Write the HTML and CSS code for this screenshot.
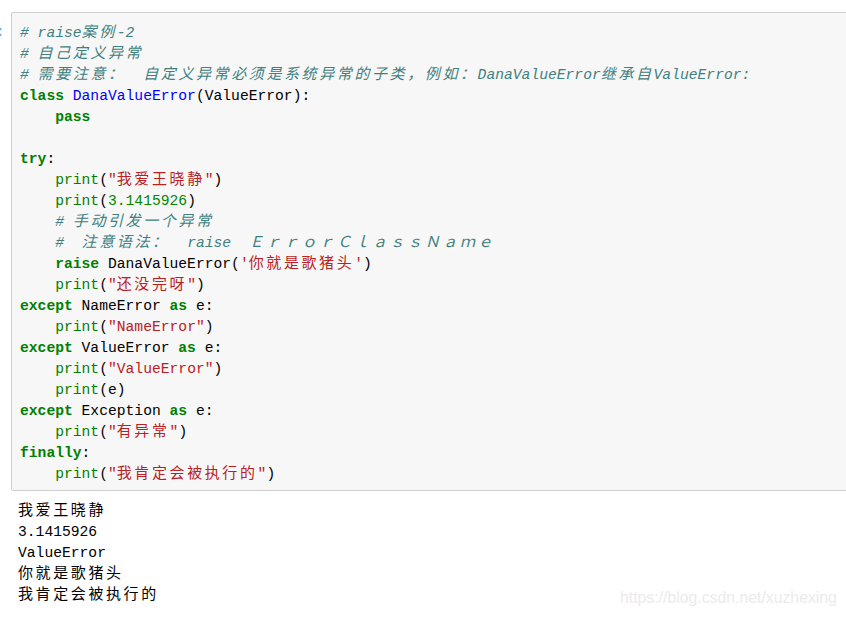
FILE: index.html
```html
<!DOCTYPE html>
<html>
<head>
<meta charset="utf-8">
<link rel="stylesheet" href="styles.css">
</head>
<body>
<div class="row">
  <div class="prompt">:</div>
  <div class="cell"><pre class="code"><span class="c"># raise<span class="z">案例</span>-2</span>
<span class="c"># <span class="z">自己定义异常</span></span>
<span class="c"># <span class="z">需要注意：</span>  <span class="z">自定义异常必须是系统异常的子类，例如：</span>DanaValueError<span class="z">继承自</span>ValueError:</span>
<span class="k">class</span> <span class="nc">DanaValueError</span>(ValueError):
    <span class="k">pass</span>

<span class="k">try</span>:
    <span class="b">print</span>(<span class="s">"<span class="z">我爱王晓静</span>"</span>)
    <span class="b">print</span>(<span class="m">3.1415926</span>)
    <span class="c"># <span class="z">手动引发一个异常</span></span>
    <span class="c">#  <span class="z">注意语法：</span>  raise  <span class="z">ＥｒｒｏｒＣｌａｓｓＮａｍｅ</span></span>
    <span class="k">raise</span> DanaValueError(<span class="s">'<span class="z">你就是歌猪头</span>'</span>)
    <span class="b">print</span>(<span class="s">"<span class="z">还没完呀</span>"</span>)
<span class="k">except</span> NameError <span class="k">as</span> e:
    <span class="b">print</span>(<span class="s">"NameError"</span>)
<span class="k">except</span> ValueError <span class="k">as</span> e:
    <span class="b">print</span>(<span class="s">"ValueError"</span>)
    <span class="b">print</span>(e)
<span class="k">except</span> Exception <span class="k">as</span> e:
    <span class="b">print</span>(<span class="s">"<span class="z">有异常</span>"</span>)
<span class="k">finally</span>:
    <span class="b">print</span>(<span class="s">"<span class="z">我肯定会被执行的</span>"</span>)</pre></div>
</div>
<pre class="output"><span class="z">我爱王晓静</span>
3.1415926
ValueError
<span class="z">你就是歌猪头</span>
<span class="z">我肯定会被执行的</span></pre>
<div class="watermark">https://blog.csdn.net/xuzhexing</div>
</body>
</html>
```

FILE: styles.css
```css
html, body {
  margin: 0;
  padding: 0;
  background: #ffffff;
  width: 846px;
  height: 617px;
  overflow: hidden;
  position: relative;
}

.row {
  display: flex;
  align-items: flex-start;
  padding-top: 12px;
}

.prompt {
  width: 11px;
  flex: 0 0 11px;
  overflow: hidden;
  font-family: "Liberation Mono", monospace;
  font-size: 14.67px;
  line-height: 21px;
  color: #6cb6ea;
  margin-top: 10px;
  text-indent: -4px;
}

.cell {
  flex: 0 0 850px;
  background: #f7f7f7;
  border: 1px solid #cfcfcf;
  border-radius: 2px;
  box-sizing: border-box;
  padding: 10px 8px 5px 8px;
}

.code, .output {
  margin: 0;
  font-family: "Liberation Mono", "Noto Sans CJK SC", monospace;
  font-size: 14.67px;
  line-height: 21px;
  color: #000000;
}

.output {
  margin: 10px 0 0 18px;
}

.z {
  font-family: "Noto Sans CJK SC", sans-serif;
  font-size: 15px;
  line-height: 1;
  letter-spacing: 2.6px;
}

.c { color: #408080; font-style: italic; }
.k { color: #008000; font-weight: bold; }
.b { color: #008000; }
.nc { color: #0000ff; }
.s { color: #ba2121; }
.m { color: #008800; }

.watermark {
  position: absolute;
  left: 620px;
  top: 589px;
  font-family: "Liberation Sans", Arial, sans-serif;
  font-size: 15.8px;
  color: #ebebeb;
  white-space: nowrap;
}
```
